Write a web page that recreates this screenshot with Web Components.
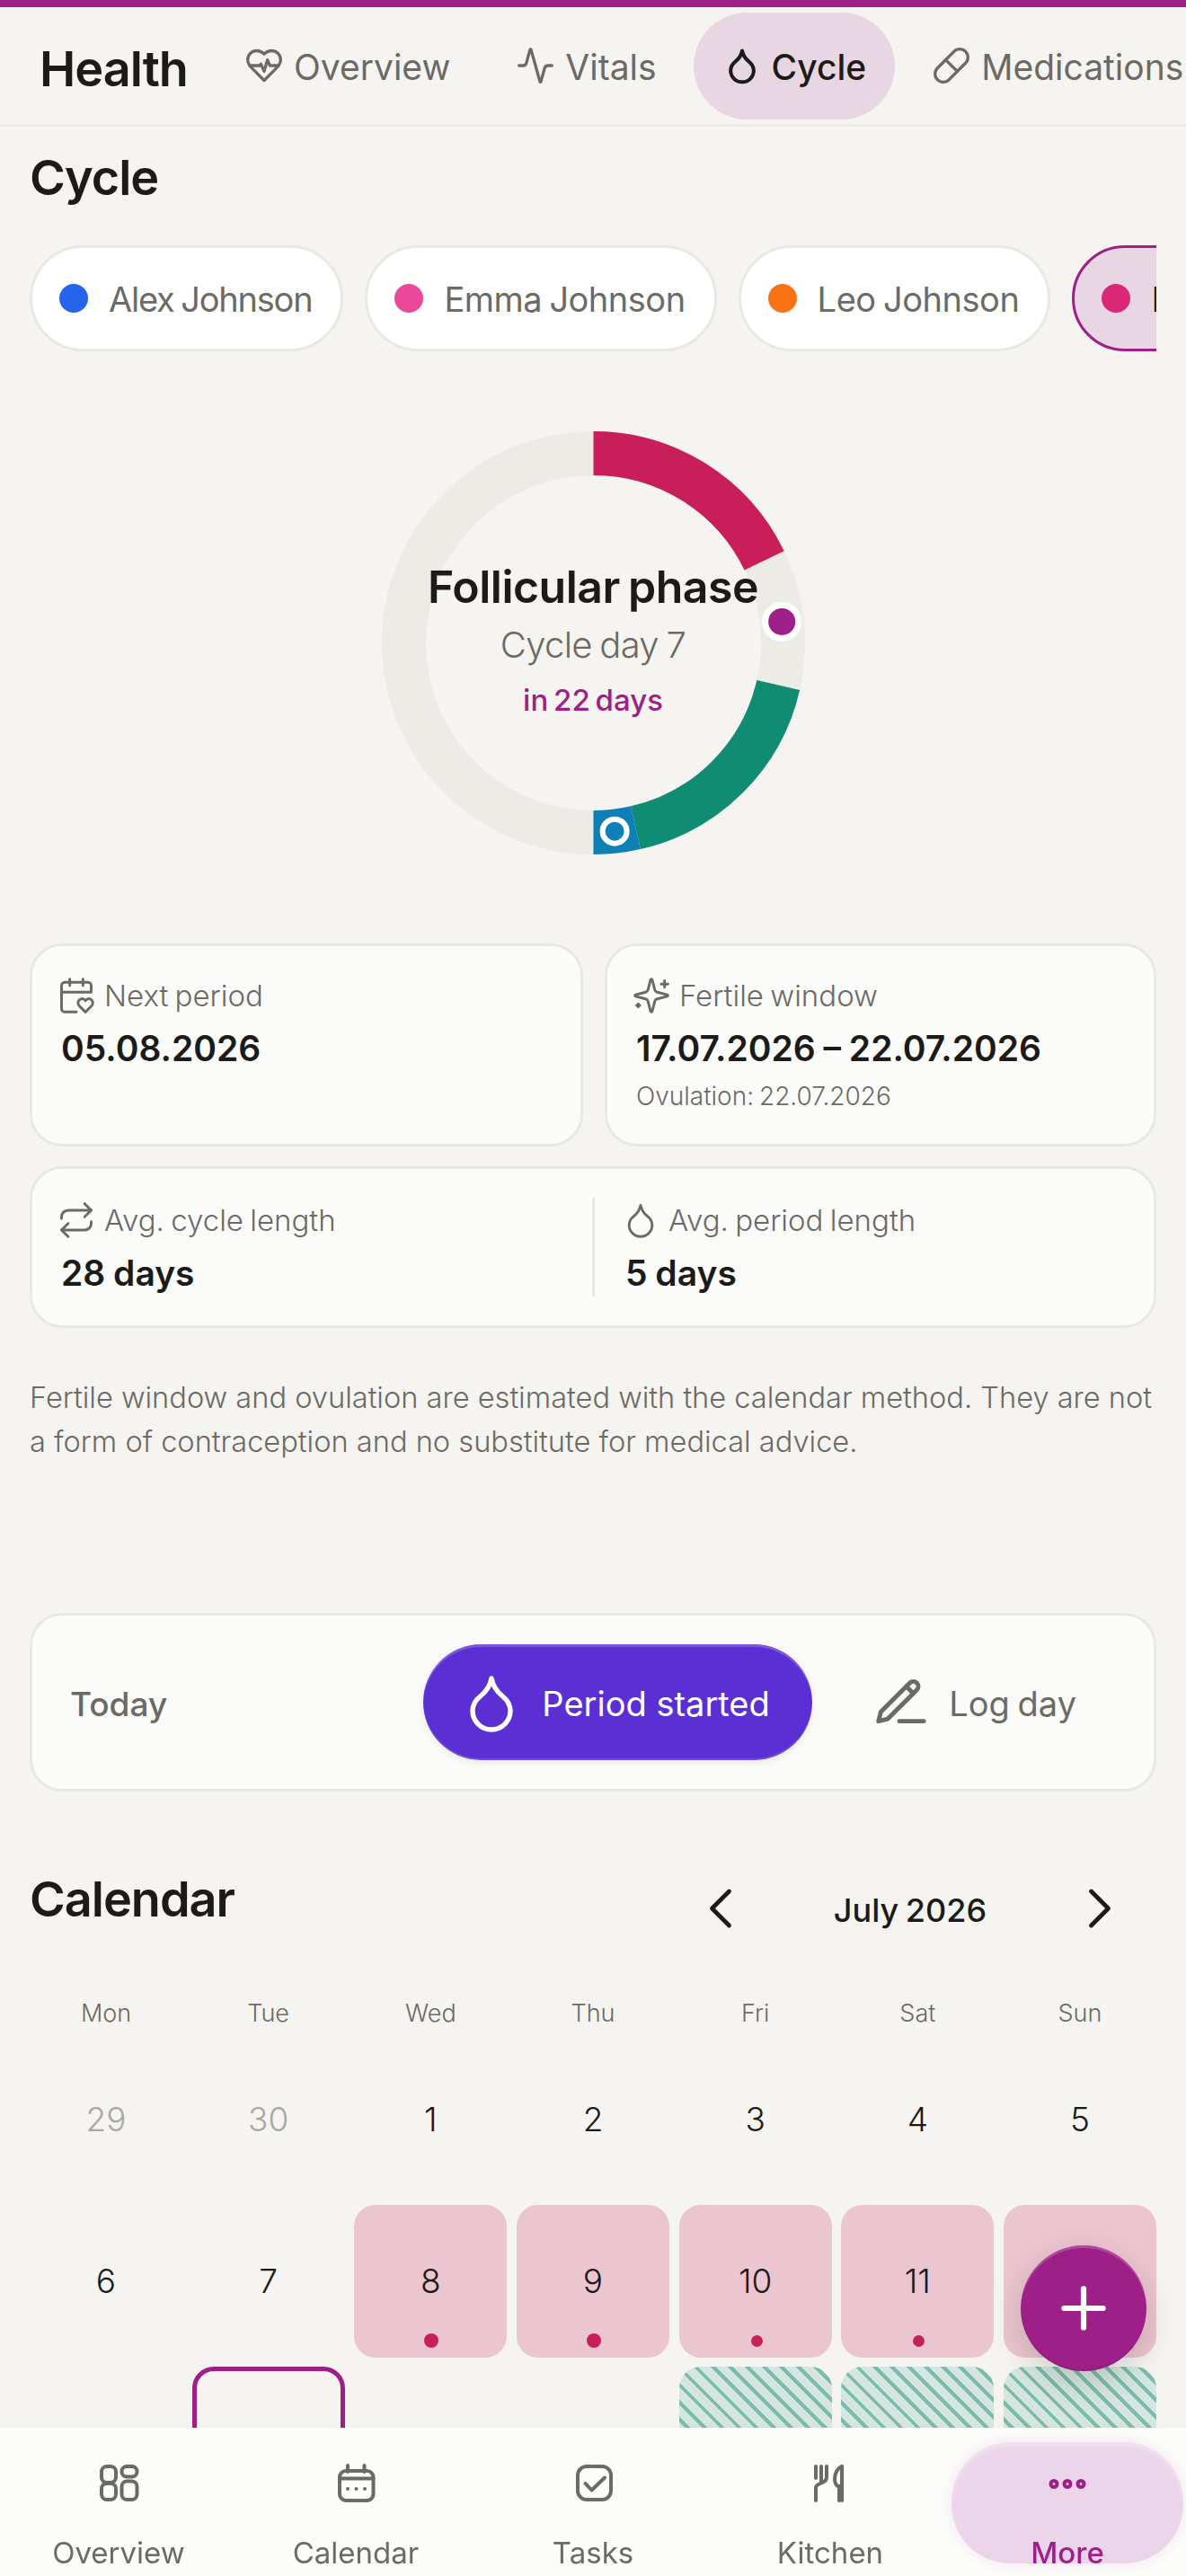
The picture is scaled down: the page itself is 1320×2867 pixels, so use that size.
<!doctype html>
<html lang="en">
<head>
<meta charset="utf-8">
<title>Health - Cycle</title>
<style>
  html, body { margin: 0; height: 2867px; overflow: hidden; background: #f5f4f0; }
  body { font-family: Inter, Lato, sans-serif; color: #1c1b19; --muted: #6b6a65; --accent: #9e1f87; --line: #eae8e3; }
  main { display: block; padding: 0 33px; }
</style>
</head>
<body>
<health-header>
  <health-tab icon="heart-pulse">Overview</health-tab>
  <health-tab icon="activity">Vitals</health-tab>
  <health-tab icon="droplet" active>Cycle</health-tab>
  <health-tab icon="pill">Medications</health-tab>
</health-header>
<main>
  <section-title>Cycle</section-title>
  <chip-row>
    <person-chip color="#2563eb" style="letter-spacing: -1.2px">Alex Johnson</person-chip>
    <person-chip color="#ec4899" style="letter-spacing: -.5px">Emma Johnson</person-chip>
    <person-chip color="#f97316" style="letter-spacing: -.45px">Leo Johnson</person-chip>
    <person-chip color="#db2777" active>Lia Johnson</person-chip>
  </chip-row>
  <cycle-ring phase="Follicular phase" day="Cycle day 7" next="in 22 days"></cycle-ring>
  <stat-grid>
    <stat-card icon="calendar-heart" label="Next period" value="05.08.2026"></stat-card>
    <stat-card icon="sparkles" label="Fertile window" value="17.07.2026 – 22.07.2026" note="Ovulation: 22.07.2026"></stat-card>
    <avg-card></avg-card>
  </stat-grid>
  <cycle-note>Fertile window and ovulation are estimated with the calendar method. They are not a form of contraception and no substitute for medical advice.</cycle-note>
  <today-card></today-card>
  <month-calendar title="Calendar" month="July 2026">
    <cal-day muted>29</cal-day><cal-day muted>30</cal-day><cal-day>1</cal-day><cal-day>2</cal-day><cal-day>3</cal-day><cal-day>4</cal-day><cal-day>5</cal-day>
    <cal-day>6</cal-day><cal-day>7</cal-day><cal-day kind="period" dot="lg">8</cal-day><cal-day kind="period" dot="lg">9</cal-day><cal-day kind="period" dot="sm">10</cal-day><cal-day kind="period" dot="sm">11</cal-day><cal-day kind="period" dot="sm">12</cal-day>
    <cal-day>13</cal-day><cal-day kind="today">14</cal-day><cal-day>15</cal-day><cal-day>16</cal-day><cal-day kind="fertile">17</cal-day><cal-day kind="fertile">18</cal-day><cal-day kind="fertile">19</cal-day>
  </month-calendar>
</main>
<fab-button></fab-button>
<bottom-nav>
  <nav-item icon="dashboard">Overview</nav-item>
  <nav-item icon="calendar-dots">Calendar</nav-item>
  <nav-item icon="square-check">Tasks</nav-item>
  <nav-item icon="utensils">Kitchen</nav-item>
  <nav-item icon="ellipsis" active>More</nav-item>
</bottom-nav>

<script>
(function () {
  // nav icons were measured on a 60 unit box, the rest are 24 unit
  const box60 = (s) => `<g transform="scale(.4)" stroke-width="4">${s}</g>`;
  const ICONS = {
    'heart-pulse': '<path d="M19 14c1.49-1.46 3-3.21 3-5.5A5.5 5.5 0 0 0 16.5 3c-1.76 0-3 .5-4.5 2-1.5-1.5-2.74-2-4.5-2A5.5 5.5 0 0 0 2 8.5c0 2.3 1.5 4.05 3 5.5l7 7Z"/><path d="M3.22 12H9.5l.5-1 2 4.5 2-7 1.5 3.5h5.27"/>',
    activity: '<path d="M22 12h-2.48a2 2 0 0 0-1.93 1.46l-2.35 8.36a.25.25 0 0 1-.48 0L9.24 2.18a.25.25 0 0 0-.48 0l-2.35 8.36A2 2 0 0 1 4.49 12H2"/>',
    droplet: '<path d="M12 22a7 7 0 0 0 7-7c0-2-1-3.9-3-5.5s-3.5-4-4-6.5c-.5 2.5-2 4.9-4 6.5C6 11.1 5 13 5 15a7 7 0 0 0 7 7z"/>',
    pill: '<path d="m10.5 20.5 10-10a4.95 4.95 0 1 0-7-7l-10 10a4.95 4.95 0 1 0 7 7Z"/><path d="m8.5 8.5 7 7"/>',
    'calendar-heart': '<path d="M3 10h18V6a2 2 0 0 0-2-2H5a2 2 0 0 0-2 2v14a2 2 0 0 0 2 2h7"/><path d="M8 2v4"/><path d="M16 2v4"/><path d="M21.29 14.7a2.43 2.43 0 0 0-2.65-.52c-.3.12-.57.3-.8.53l-.34.34-.35-.34a2.43 2.43 0 0 0-2.65-.53c-.3.12-.56.3-.79.53-.95.94-1 2.53.2 3.74L17.5 22l3.6-3.55c1.2-1.21 1.14-2.8.19-3.74Z"/>',
    sparkles: '<path d="M9.937 15.5A2 2 0 0 0 8.5 14.063l-6.135-1.582a.5.5 0 0 1 0-.962L8.5 9.936A2 2 0 0 0 9.937 8.5l1.582-6.135a.5.5 0 0 1 .963 0L14.063 8.5A2 2 0 0 0 15.5 9.937l6.135 1.581a.5.5 0 0 1 0 .964L15.5 14.063a2 2 0 0 0-1.437 1.437l-1.582 6.135a.5.5 0 0 1-.963 0z"/><path d="M20 3v4"/><path d="M22 5h-4"/><path d="M4 17v2"/><path d="M5 18H3"/>',
    repeat: '<path d="m17 2 4 4-4 4"/><path d="M3 11v-1a4 4 0 0 1 4-4h14"/><path d="m7 22-4-4 4-4"/><path d="M21 13v1a4 4 0 0 1-4 4H3"/>',
    'pencil-line': '<path d="M12 20h10.5"/><path d="M16.5 3.5a2.12 2.12 0 0 1 3 3L7 19l-4 1 1-4Z"/><path d="m15 5 3 3"/>',
    dashboard: box60('<rect x="11" y="10" width="16" height="18" rx="6"/><rect x="11" y="29" width="16" height="18" rx="6"/><rect x="33.500" y="10" width="17" height="11.500" rx="5.500"/><rect x="33.500" y="26.500" width="17" height="20.500" rx="6"/>'),
    'calendar-dots': box60('<path d="M21 9v7"/><path d="M39.500 9v7"/><rect x="12" y="15" width="37.500" height="33" rx="7"/><path d="M12 23.500h37.500"/><path d="M21 35h.01"/><path d="M30.500 35h.01"/><path d="M40 35h.01"/>'),
    'square-check': box60('<rect x="13" y="10" width="37" height="37" rx="10"/><path d="m21.500 29 7 7.500 14.500-14"/>'),
    utensils: box60('<path d="M14 10v13"/><path d="M20 10v18"/><path d="M26 10v12c0 3-2 5-5 6l-4 2c-2 1-3 2-3 4v14"/><path d="M43 10v38"/><path d="M43 10c-5 2-8 8-8 14s3 8 4 8h4" /><path d="M40 33v15"/>'),
    ellipsis: box60('<circle cx="15" cy="29.500" r="3.500"/><circle cx="30" cy="29.500" r="3.500"/><circle cx="45" cy="29.500" r="3.500"/>'),
    plus: '<path d="M5 12h14"/><path d="M12 5v14"/>',
    'chevron-left': '<path d="m15 18-6-6 6-6"/>',
    'chevron-right': '<path d="m9 18 6-6-6-6"/>',
  };

  class AppIcon extends HTMLElement {
    connectedCallback() {
      const size = this.getAttribute('size') || 42;
      const stroke = this.getAttribute('stroke') || 2;
      this.attachShadow({ mode: 'open' }).innerHTML = `
        <style>:host { display: inline-flex; flex: none; } svg { display: block; }</style>
        <svg width="${size}" height="${size}" viewBox="0 0 24 24" fill="none" stroke="currentColor"
          stroke-width="${stroke}" stroke-linecap="round" stroke-linejoin="round">${ICONS[this.getAttribute('name')]}</svg>`;
    }
  }

  // small helper, most elements here are just a template and a slot
  function simple(name, html) {
    const template = document.createElement('template');
    template.innerHTML = html;
    customElements.define(name, class extends HTMLElement {
      constructor() {
        super();
        this.attachShadow({ mode: 'open' }).appendChild(template.content.cloneNode(true));
      }
    });
  }

  customElements.define('app-icon', AppIcon);

  const HEAD = 'font-size: 54px; font-weight: 600; letter-spacing: -1px;';

  simple('health-header', `
    <style>
      :host { display: flex; align-items: center; box-sizing: border-box; height: 141px; border-top: 8px solid var(--accent); border-bottom: 3px solid #eeece8; overflow: hidden; }
      h1 { margin: 6px 0 0 44px; ${HEAD} flex: none; width: 196px; }
      nav { display: flex; gap: 9px; height: 119px; flex: none; }
    </style>
    <h1>Health</h1><nav><slot></slot></nav>`);

  class HealthTab extends HTMLElement {
    connectedCallback() {
      const active = this.hasAttribute('active');
      this.attachShadow({ mode: 'open' }).innerHTML = `
        <style>
          :host { display: flex; align-items: center; gap: 11px; padding: 0 32px; border-radius: 60px; font-size: 39px; color: var(--muted); white-space: nowrap; }
          :host([active]) { background: #e8d7e3; color: #1c1b19; font-weight: 500; }
          span { padding-top: 2px; }
        </style>
        <app-icon name="${this.getAttribute('icon')}" size="44" stroke="${active ? 2.2 : 1.8}"></app-icon><span><slot></slot></span>`;
    }
  }
  customElements.define('health-tab', HealthTab);

  simple('section-title', `
    <style>:host { display: block; ${HEAD} line-height: 68px; padding-top: 23px; }</style><slot></slot>`);

  simple('chip-row', `
    <style>:host { display: flex; gap: 24px; margin-top: 41px; overflow: hidden; }</style><slot></slot>`);

  class PersonChip extends HTMLElement {
    connectedCallback() {
      this.attachShadow({ mode: 'open' }).innerHTML = `
        <style>
          :host { display: flex; flex: none; align-items: center; gap: 23px; box-sizing: border-box; height: 118px; padding: 0 32px 0 30px; background: #fff; border: 3px solid var(--line); border-radius: 59px; font-size: 38px; word-spacing: -2px; color: var(--muted); white-space: nowrap; }
          :host([active]) { background: #e8d7e3; border-color: var(--accent); color: #1c1b19; }
          i { width: 32px; height: 32px; border-radius: 50%; background: ${this.getAttribute('color')}; }
          span { padding-top: 2px; }
        </style>
        <i></i><span><slot></slot></span>`;
    }
  }
  customElements.define('person-chip', PersonChip);

  class CycleRing extends HTMLElement {
    connectedCallback() {
      // 28 day cycle, angles are computed from the day number
      const r = 211, c = 235.5;
      const pt = (day) => {
        const a = (day / 28) * 2 * Math.PI;
        return [c + r * Math.sin(a), c - r * Math.cos(a)];
      };
      const arc = (from, to, color) => {
        const [x1, y1] = pt(from), [x2, y2] = pt(to);
        return `<path d="M${x1} ${y1}A${r} ${r} 0 0 1 ${x2} ${y2}" stroke="${color}"/>`;
      };
      const [mx, my] = pt(6.5), [ox, oy] = pt(13.5);
      this.attachShadow({ mode: 'open' }).innerHTML = `
        <style>
          :host { display: grid; justify-content: center; margin-top: 89px; }
          svg, div { grid-area: 1 / 1; }
          div { display: flex; flex-direction: column; align-items: center; text-align: center; }
          b { font-size: 50px; font-weight: 600; line-height: 64px; margin-top: 141px; letter-spacing: -.5px; word-spacing: -3px; }
          span { font-size: 40px; line-height: 50px; margin-top: 8px; color: var(--muted); font-weight: 300; letter-spacing: -.7px; word-spacing: -2px; }
          em { font-style: normal; font-size: 33px; line-height: 42px; margin-top: 15px; color: var(--accent); font-weight: 500; word-spacing: -3px; }
        </style>
        <svg width="471" height="471" viewBox="0 0 471 471" fill="none" stroke-width="49">
          <circle cx="${c}" cy="${c}" r="${r}" stroke="#ecebe6"/>
          ${arc(0, 5, '#c81f5b')}${arc(8, 13, '#108c73')}${arc(13, 14, '#0f80b5')}
          <circle cx="${mx}" cy="${my}" r="18.5" fill="#9e1f87" stroke="#fff" stroke-width="7"/>
          <circle cx="${ox}" cy="${oy}" r="13.5" fill="#0f80b5" stroke="#fff" stroke-width="6"/>
        </svg>
        <div><b>${this.getAttribute('phase')}</b><span>${this.getAttribute('day')}</span><em>${this.getAttribute('next')}</em></div>`;
    }
  }
  customElements.define('cycle-ring', CycleRing);

  simple('stat-grid', `
    <style>
      :host { display: grid; grid-template-columns: 616px 614px; gap: 22px 24px; margin-top: 99px; }
      ::slotted(avg-card) { grid-column: 1 / -1; }
    </style><slot></slot>`);

  const CARD = 'box-sizing: border-box; background: #fbfbf9; border: 3px solid var(--line); border-radius: 36px;';
  const LABEL = `
    .label { display: flex; align-items: center; gap: 9px; height: 44px; font-size: 33px; color: var(--muted); font-weight: 300; word-spacing: -2px; white-space: nowrap; }
    .label app-icon { margin-left: -5px; }
    .value { font-size: 39px; font-weight: 600; line-height: 48px; margin-top: 13px; word-spacing: -1px; white-space: nowrap; }`;

  class StatCard extends HTMLElement {
    connectedCallback() {
      const note = this.getAttribute('note');
      this.attachShadow({ mode: 'open' }).innerHTML = `
        <style>
          :host { display: block; height: 226px; padding: 33px 32px 0; ${CARD} }
          ${LABEL}
          .note { font-size: 28px; font-weight: 300; line-height: 36px; margin-top: 11px; color: var(--muted); word-spacing: -2px; }
        </style>
        <div class="label"><app-icon name="${this.getAttribute('icon')}" size="44" stroke="1.6"></app-icon>${this.getAttribute('label')}</div>
        <div class="value">${this.getAttribute('value')}</div>
        ${note ? `<div class="note">${note}</div>` : ''}`;
    }
  }
  customElements.define('stat-card', StatCard);

  simple('avg-card', `
    <style>
      :host { display: flex; align-items: center; height: 180px; padding: 0 32px; ${CARD} }
      section { flex: 1; height: 110px; display: flex; flex-direction: column; justify-content: center; }
      section + section { flex: none; width: 593px; box-sizing: border-box; border-left: 3px solid var(--line); padding-left: 34px; }
      ${LABEL}
    </style>
    <section><div class="label"><app-icon name="repeat" size="44" stroke="1.6"></app-icon>Avg. cycle length</div><div class="value">28 days</div></section>
    <section><div class="label"><app-icon name="droplet" size="44" stroke="1.6"></app-icon>Avg. period length</div><div class="value">5 days</div></section>`);

  simple('cycle-note', `
    <style>:host { display: block; margin-top: 53px; font-size: 32.6px; font-weight: 300; line-height: 49px; color: var(--muted); }</style><slot></slot>`);

  simple('today-card', `
    <style>
      :host { display: flex; align-items: center; height: 199px; margin-top: 166px; padding: 0 42px; ${CARD} }
      .today { font-size: 37px; font-weight: 500; color: var(--muted); flex: 1; padding-top: 3px; }
      .start { display: flex; align-items: center; gap: 20px; height: 129px; width: 433px; box-sizing: border-box; padding-left: 40px; border-radius: 65px; background: #5b2fd3; color: #fff; font-size: 38px; box-shadow: inset 0 3px 0 rgba(255,255,255,.2), inset 0 -2px 0 rgba(255,255,255,.14), 0 3px 9px rgba(0,0,0,.08); }
      .log { display: flex; align-items: center; gap: 24px; font-size: 38px; color: var(--muted); margin: 0 44px 0 66px; word-spacing: -2px; }
      .start span, .log span { padding-top: 3px; }
    </style>
    <div class="today">Today</div>
    <div class="start"><app-icon name="droplet" size="72" stroke="1.8"></app-icon><span>Period started</span></div>
    <div class="log"><app-icon name="pencil-line" size="62" stroke="1.9"></app-icon><span>Log day</span></div>`);

  class MonthCalendar extends HTMLElement {
    connectedCallback() {
      const days = ['Mon', 'Tue', 'Wed', 'Thu', 'Fri', 'Sat', 'Sun'];
      this.attachShadow({ mode: 'open' }).innerHTML = `
        <style>
          :host { display: block; }
          header { display: flex; align-items: flex-start; height: 148px; padding-top: 86px; box-sizing: border-box; }
          h2 { margin: 0; flex: 1; ${HEAD} line-height: 68px; }
          .month { display: flex; align-items: center; justify-content: space-between; width: 498px; margin-right: 25px; height: 76px; margin-top: 6px; font-size: 36px; font-weight: 500; word-spacing: -2px; }
          .month span { padding-top: 4px; }
          .week, .grid { display: grid; grid-template-columns: repeat(7, 1fr); column-gap: 10.67px; }
          .week { font-size: 27px; font-weight: 300; color: var(--muted); text-align: center; height: 43px; align-items: end; line-height: 36px; margin-top: 74px; }
          .grid { row-gap: 10.67px; margin-top: 14px; }
        </style>
        <header><h2>${this.getAttribute('title')}</h2>
          <div class="month"><app-icon name="chevron-left" size="76" stroke="1.5"></app-icon><span>${this.getAttribute('month')}</span><app-icon name="chevron-right" size="76" stroke="1.5"></app-icon></div>
        </header>
        <div class="week">${days.map((d) => `<span>${d}</span>`).join('')}</div>
        <div class="grid"><slot></slot></div>`;
    }
  }
  customElements.define('month-calendar', MonthCalendar);

  simple('cal-day', `
    <style>
      :host { display: flex; position: relative; align-items: center; justify-content: center; box-sizing: border-box; height: 170px; border-radius: 24px; font-size: 37px; font-weight: 300; color: #1c1b19; }
      :host([muted]) { color: #a9a8a3; }
      :host([kind="period"]) { background: #ebc5d0; }
      :host([kind="today"]) { border: 5px solid var(--accent); }
      :host([kind="fertile"]) { background: repeating-linear-gradient(45deg, #d5e6e0 0 9.500px, #7cbcac 9.500px 13.500px); }
      :host([dot])::after { content: ""; position: absolute; left: 50%; border-radius: 50%; background: #c81f5b; }
      :host([dot="lg"])::after { width: 16px; height: 16px; margin-left: -7px; bottom: 11px; }
      :host([dot="sm"])::after { width: 13px; height: 13px; margin-left: -5px; bottom: 12px; }
    </style><slot></slot>`);

  simple('fab-button', `
    <style>
      :host { display: flex; align-items: center; justify-content: center; position: fixed; left: 1136px; top: 2499px; width: 140px; height: 140px; border-radius: 50%; background: var(--accent); color: #fff; box-shadow: inset 0 3px 0 rgba(255,255,255,.18), inset 0 -2px 0 rgba(0,0,0,.08), 0 12px 36px rgba(0,0,0,.16); }
    </style><app-icon name="plus" size="74" stroke="2"></app-icon>`);

  simple('bottom-nav', `
    <style>
      :host { display: grid; grid-template-columns: repeat(5, 264px); position: fixed; left: 0; right: 0; top: 2702px; height: 165px; background: #fcfcfa; box-shadow: 0 -3px 6px rgba(0,0,0,.015); }
    </style><slot></slot>`);

  class NavItem extends HTMLElement {
    connectedCallback() {
      this.attachShadow({ mode: 'open' }).innerHTML = `
        <style>
          :host { display: flex; flex-direction: column; align-items: center; position: relative; color: var(--muted); font-size: 33px; font-weight: 400; line-height: 44px; padding-top: 33px; }
          :host([active]) { color: var(--accent); font-weight: 500; }
          :host([active])::before { content: ""; position: absolute; left: 3px; right: 3px; top: 16px; height: 135px; border-radius: 66px; background: #ecd5ea; box-shadow: 0 0 16px rgba(158,31,135,.1), inset 0 4px 4px rgba(255,255,255,.35); }
          app-icon, span { position: relative; }
          span { margin-top: 24px; }
        </style>
        <app-icon name="${this.getAttribute('icon')}" size="60"></app-icon><span><slot></slot></span>`;
    }
  }
  customElements.define('nav-item', NavItem);
})();
</script>
</body>
</html>
